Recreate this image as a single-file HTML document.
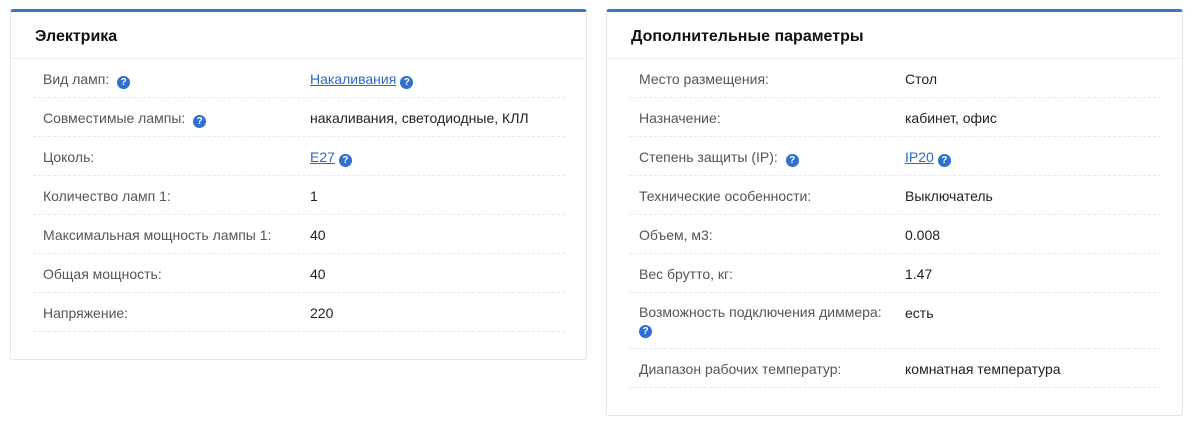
<!DOCTYPE html>
<html><head><meta charset="utf-8"><style>
body{margin:0;background:#fff;font-family:"Liberation Sans",sans-serif;width:1194px;height:425px;position:relative;overflow:hidden}
.card{position:absolute;top:9px;width:577px;border:1px solid #e6e6e6;border-top:3px solid #3a78d0;border-radius:3px;background:#fff;box-sizing:border-box}
.h{height:46px;border-bottom:1px solid #eee;font-weight:bold;font-size:16px;color:#111;padding-left:24px;line-height:49px}
.rows{margin:0 21px 27px 22px}
.r{display:flex;border-bottom:1px dashed #e8e8e8;font-size:14px;min-height:38px;align-items:flex-start}
.l{color:#555;padding:12px 0 0 10px;box-sizing:border-box}
.v{color:#222;padding-top:12px}
a{color:#2a6ac8;text-decoration:underline}
.q{display:inline-block;width:13px;height:13px;border-radius:50%;background:#2e6fd0;color:#fff;font-size:10px;font-weight:bold;line-height:13px;text-align:center;vertical-align:-1px;margin-left:4px}
</style></head><body>
<div class="card" style="left:10px">
<div class="h">Электрика</div>
<div class="rows">
<div class="r"><div class="l" style="width:277px">Вид ламп: <span class="q">?</span></div><div class="v"><a>Накаливания</a><span class="q">?</span></div></div>
<div class="r"><div class="l" style="width:277px">Совместимые лампы: <span class="q">?</span></div><div class="v">накаливания, светодиодные, КЛЛ</div></div>
<div class="r"><div class="l" style="width:277px">Цоколь:</div><div class="v"><a>E27</a><span class="q">?</span></div></div>
<div class="r"><div class="l" style="width:277px">Количество ламп 1:</div><div class="v">1</div></div>
<div class="r"><div class="l" style="width:277px">Максимальная мощность лампы 1:</div><div class="v">40</div></div>
<div class="r"><div class="l" style="width:277px">Общая мощность:</div><div class="v">40</div></div>
<div class="r"><div class="l" style="width:277px">Напряжение:</div><div class="v">220</div></div>
</div></div>
<div class="card" style="left:606px">
<div class="h">Дополнительные параметры</div>
<div class="rows">
<div class="r"><div class="l" style="width:276px">Место размещения:</div><div class="v">Стол</div></div>
<div class="r"><div class="l" style="width:276px">Назначение:</div><div class="v">кабинет, офис</div></div>
<div class="r"><div class="l" style="width:276px">Степень защиты (IP): <span class="q">?</span></div><div class="v"><a>IP20</a><span class="q">?</span></div></div>
<div class="r"><div class="l" style="width:276px">Технические особенности:</div><div class="v">Выключатель</div></div>
<div class="r"><div class="l" style="width:276px">Объем, м3:</div><div class="v">0.008</div></div>
<div class="r"><div class="l" style="width:276px">Вес брутто, кг:</div><div class="v">1.47</div></div>
<div class="r" style="min-height:55px"><div class="l" style="width:266px;margin-right:10px;line-height:16px;padding-top:11px">Возможность подключения диммера: <span class="q" style="margin-left:0">?</span></div><div class="v">есть</div></div>
<div class="r"><div class="l" style="width:276px">Диапазон рабочих температур:</div><div class="v">комнатная температура</div></div>
</div></div>
</body></html>
